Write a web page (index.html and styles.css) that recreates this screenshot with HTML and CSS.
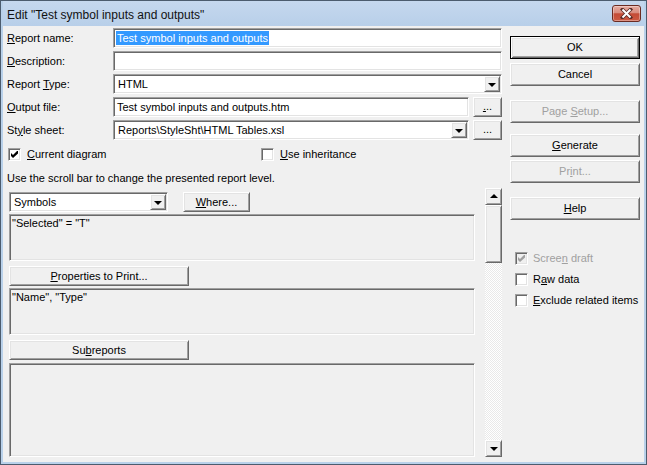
FILE: index.html
```html
<!DOCTYPE html>
<html>
<head>
<meta charset="utf-8">
<link rel="stylesheet" href="styles.css">
</head>
<body>
<div class="window">
  <div class="titlebar">
    <span class="title">Edit "Test symbol inputs and outputs"</span>
    <div class="close">
      <svg width="13" height="11" viewBox="0 0 13 11">
        <path d="M2.5 1.5 L10.5 9.5 M10.5 1.5 L2.5 9.5" stroke="#5a2c28" stroke-width="3.6" stroke-linecap="square"/>
        <path d="M2.5 1.5 L10.5 9.5 M10.5 1.5 L2.5 9.5" stroke="#fff" stroke-width="2"/>
      </svg>
    </div>
  </div>
  <div class="client">
    <div class="left">
      <div class="form">
        <div class="lbl"><u>R</u>eport name:</div>
        <div class="sunken edit"><span class="sel">Test symbol inputs and outputs</span></div>

        <div class="lbl"><u>D</u>escription:</div>
        <div class="sunken edit"></div>

        <div class="lbl">Report <u>T</u>ype:</div>
        <div class="sunken combo"><span class="ctext">HTML</span><span class="raised dropbtn"><i class="tri-down"></i></span></div>

        <div class="lbl"><u>O</u>utput file:</div>
        <div class="pair">
          <div class="sunken edit wide"><span class="etext">Test symbol inputs and outputs.htm</span></div>
          <div class="raised btn dots"><span><u>.</u>..</span></div>
        </div>

        <div class="lbl">St<u>y</u>le sheet:</div>
        <div class="pair">
          <div class="sunken combo wide"><span class="ctext">Reports\StyleSht\HTML Tables.xsl</span><span class="raised dropbtn"><i class="tri-down"></i></span></div>
          <div class="raised btn dots"><span>...</span></div>
        </div>
      </div>

      <div class="checks">
        <div class="chk"><span class="sunken cb"><svg width="7" height="7" viewBox="0 0 7 7"><polygon points="0,2 2,4 6,0 7,0 7,2.6 2,7 0,5" fill="#000"/></svg></span><span><u>C</u>urrent diagram</span></div>
        <div class="chk"><span class="sunken cb"></span><span><u>U</u>se inheritance</span></div>
      </div>

      <div class="hint">Use the scroll bar to change the presented report level.</div>

      <div class="lower">
        <div class="content">
          <div class="symrow">
            <div class="sunken combo symbols"><span class="ctext">Symbols</span><span class="raised dropbtn"><i class="tri-down"></i></span></div>
            <div class="raised btn where"><span><u>W</u>here...</span></div>
          </div>
          <div class="sunken box small">"Selected" = "T"</div>
          <div class="raised btn wbtn"><span><u>P</u>roperties to Print...</span></div>
          <div class="sunken box small">"Name", "Type"</div>
          <div class="raised btn wbtn"><span>Su<u>b</u>reports</span></div>
          <div class="sunken box big"></div>
        </div>
        <div class="scrollbar">
          <div class="raised sbtn"><i class="tri-up"></i></div>
          <div class="raised thumb"></div>
          <div class="track"></div>
          <div class="raised sbtn"><i class="tri-down"></i></div>
        </div>
      </div>
    </div>

    <div class="right">
      <div class="btn default ok"><span>OK</span></div>
      <div class="raised btn rb cancel"><span>Cancel</span></div>
      <div class="raised btn rb disabled setup"><span>Page <u>S</u>etup...</span></div>
      <div class="raised btn rb generate"><span><u>G</u>enerate</span></div>
      <div class="raised btn rb disabled print"><span>Pr<u>i</u>nt...</span></div>
      <div class="raised btn rb help"><span><u>H</u>elp</span></div>

      <div class="rchecks">
        <div class="chk disabled"><span class="sunken cb gray"><svg width="7" height="7" viewBox="0 0 7 7"><polygon points="0,2 2,4 6,0 7,0 7,2.6 2,7 0,5" fill="#a0a0a0"/></svg></span><span>Scree<u>n</u> draft</span></div>
        <div class="chk"><span class="sunken cb"></span><span>R<u>a</u>w data</span></div>
        <div class="chk"><span class="sunken cb"></span><span><u>E</u>xclude related items</span></div>
      </div>
    </div>
  </div>
</div>
</body>
</html>
```

FILE: styles.css
```css
* { box-sizing: border-box; }

body {
  margin: 0;
  font-family: "Liberation Sans", Arial, sans-serif;
  font-size: 11px;
  color: #000;
  background: #fff;
}

u { text-decoration: underline; text-underline-offset: 1px; }

.window {
  width: 647px;
  height: 465px;
  border: 1px solid #4c5c6e;
  background: #b9d1ea;
  padding: 0 2px 2px 2px;
  display: flex;
  flex-direction: column;
}

.titlebar {
  height: 25px;
  flex: none;
  display: flex;
  align-items: flex-start;
  padding-left: 4px;
  background: linear-gradient(#c5d8ee, #b8cfe9);
}

.title {
  font-size: 12px;
  line-height: 14px;
  margin-top: 7px;
  color: #111;
}

.close {
  margin-left: auto;
  margin-right: 3px;
  margin-top: 4px;
  width: 29px;
  height: 17px;
  border: 1px solid #6b2b22;
  border-radius: 3px;
  background: linear-gradient(#e6aca2 0%, #d98c7e 45%, #c44b36 52%, #cd5a43 100%);
  box-shadow: inset 0 0 0 1px rgba(255, 255, 255, 0.35);
  display: flex;
  align-items: center;
  justify-content: center;
}

.client {
  flex: 1;
  background: #f0f0f0;
  display: flex;
  padding: 2px 4px 0 4px;
  gap: 8px;
}

.left {
  width: 495px;
  flex: none;
  display: flex;
  flex-direction: column;
}

.right {
  width: 130px;
  flex: none;
  display: flex;
  flex-direction: column;
  padding-top: 8px;
}

/* 3D borders */
.sunken {
  border: 1px solid;
  border-color: #a0a0a0 #fff #fff #a0a0a0;
  box-shadow: inset 1px 1px #696969, inset -1px -1px #e3e3e3;
  padding: 1px;
}

.raised {
  border: 1px solid;
  border-color: #fff #696969 #696969 #fff;
  box-shadow: inset 1px 1px #e3e3e3, inset -1px -1px #a0a0a0;
  background: #f0f0f0;
}

/* form */
.form {
  display: grid;
  grid-template-columns: 106px 389px;
  grid-auto-rows: 20px;
  row-gap: 3px;
  align-items: center;
}

.lbl { line-height: 13px; }

.edit, .combo {
  height: 20px;
  background: #fff;
  display: flex;
  align-items: center;
}

.edit .sel {
  margin-left: 1px;
  padding: 0 1px;
  line-height: 14px;
  background: #3399ff;
  color: #fff;
}

.etext, .ctext {
  padding-left: 2px;
  line-height: 13px;
  flex: 1;
  white-space: nowrap;
  overflow: hidden;
}

.combo .ctext { padding-left: 3px; }

.dropbtn {
  width: 16px;
  height: 16px;
  flex: none;
  display: flex;
  align-items: center;
  justify-content: center;
}

.tri-down, .tri-up {
  display: block;
  width: 0;
  height: 0;
  border-left: 4px solid transparent;
  border-right: 4px solid transparent;
}
.tri-down { border-top: 4px solid #000; margin-top: 1px; }
.tri-up { border-bottom: 4px solid #000; margin-bottom: 1px; }

.pair {
  display: flex;
  gap: 4px;
  height: 20px;
}
.wide { width: 356px; flex: none; }

.btn {
  display: flex;
  align-items: center;
  justify-content: center;
  line-height: 13px;
  white-space: nowrap;
}

.dots {
  width: 29px;
  height: 20px;
  align-items: flex-end;
  padding-bottom: 3px;
}

/* checkboxes */
.checks {
  margin-top: 8px;
  display: grid;
  grid-template-columns: 253px auto;
  padding-left: 1px;
  height: 13px;
}

.chk {
  display: flex;
  align-items: center;
  gap: 6px;
  line-height: 13px;
  height: 13px;
}

.cb {
  width: 13px;
  height: 13px;
  flex: none;
  background: #fff;
  display: flex;
  align-items: center;
  justify-content: center;
  padding: 0;
}
.cb.gray { background: #f0f0f0; }

.hint {
  margin-top: 11px;
  line-height: 13px;
}

/* lower */
.lower {
  margin-top: 3px;
  display: flex;
}

.content {
  width: 466px;
  margin-left: 2px;
  padding-top: 4px;
  display: flex;
  flex-direction: column;
}

.symrow {
  display: flex;
  height: 20px;
}

.symbols { width: 159px; }

.where {
  width: 67px;
  height: 20px;
  margin-left: 15px;
}

.box {
  background: #f0f0f0;
  padding: 2px 2px 1px 2px;
  line-height: 13px;
}
.box.small { height: 47px; margin-top: 2px; }
.box.big { height: 94px; margin-top: 3px; }

.wbtn {
  width: 180px;
  height: 20px;
  margin-top: 5px;
}

.scrollbar {
  width: 17px;
  height: 269px;
  margin-left: 10px;
  display: flex;
  flex-direction: column;
}

.sbtn {
  height: 17px;
  flex: none;
  display: flex;
  align-items: center;
  justify-content: center;
}

.thumb { height: 58px; flex: none; }

.track {
  flex: 1;
  background: repeating-conic-gradient(#fff 0 25%, #e9e9e9 0 50%) 0 0 / 2px 2px;
}

/* right column */
.right .btn { height: 23px; }

.default {
  border: 1px solid #000;
  background: #f0f0f0;
  box-shadow: inset 1px 1px #fff, inset -1px -1px #696969, inset 2px 2px #e3e3e3, inset -2px -2px #a0a0a0;
}

.cancel { margin-top: 4px; }
.setup { margin-top: 14px; }
.generate { margin-top: 11px; }
.print { margin-top: 3px; }
.help { margin-top: 14px; }

.disabled { color: #a0a0a0; }

.rchecks {
  margin-top: 32px;
  padding-left: 5px;
  display: flex;
  flex-direction: column;
  gap: 8px;
}
.rchecks .chk { gap: 5px; }
```
